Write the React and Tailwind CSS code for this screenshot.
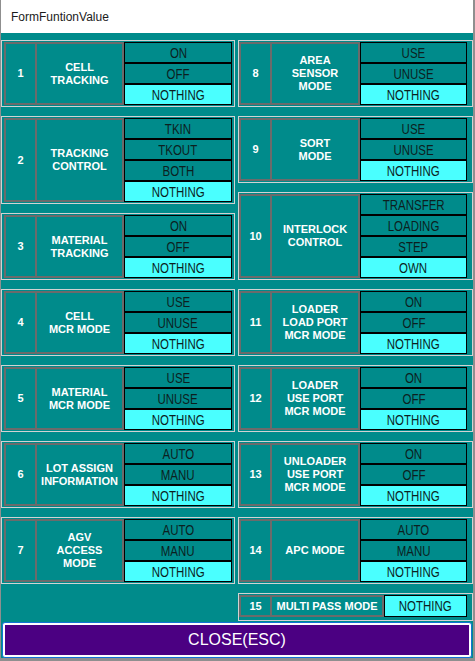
import React from "react";

const FONT = { fontFamily: '"Liberation Sans", Arial, sans-serif' };

const left = [
  { n: "1", label: ["CELL", "TRACKING"], opts: ["ON", "OFF", "NOTHING"], sel: 2 },
  { n: "2", label: ["TRACKING", "CONTROL"], opts: ["TKIN", "TKOUT", "BOTH", "NOTHING"], sel: 3 },
  { n: "3", label: ["MATERIAL", "TRACKING"], opts: ["ON", "OFF", "NOTHING"], sel: 2 },
  { n: "4", label: ["CELL", "MCR MODE"], opts: ["USE", "UNUSE", "NOTHING"], sel: 2 },
  { n: "5", label: ["MATERIAL", "MCR MODE"], opts: ["USE", "UNUSE", "NOTHING"], sel: 2 },
  { n: "6", label: ["LOT ASSIGN", "INFORMATION"], opts: ["AUTO", "MANU", "NOTHING"], sel: 2 },
  { n: "7", label: ["AGV", "ACCESS", "MODE"], opts: ["AUTO", "MANU", "NOTHING"], sel: 2 },
];

const right = [
  { n: "8", label: ["AREA", "SENSOR", "MODE"], opts: ["USE", "UNUSE", "NOTHING"], sel: 2 },
  { n: "9", label: ["SORT", "MODE"], opts: ["USE", "UNUSE", "NOTHING"], sel: 2 },
  { n: "10", label: ["INTERLOCK", "CONTROL"], opts: ["TRANSFER", "LOADING", "STEP", "OWN"], sel: 3 },
  { n: "11", label: ["LOADER", "LOAD PORT", "MCR MODE"], opts: ["ON", "OFF", "NOTHING"], sel: 2 },
  { n: "12", label: ["LOADER", "USE PORT", "MCR MODE"], opts: ["ON", "OFF", "NOTHING"], sel: 2 },
  { n: "13", label: ["UNLOADER", "USE PORT", "MCR MODE"], opts: ["ON", "OFF", "NOTHING"], sel: 2 },
  { n: "14", label: ["APC MODE"], opts: ["AUTO", "MANU", "NOTHING"], sel: 2 },
];

function Option({ text, selected }) {
  return (
    <div
      className={
        selected
          ? "h-[21px] border border-black bg-[#4affff] flex items-center justify-center overflow-hidden"
          : "h-[21px] border border-black bg-[#008b8b] flex items-center justify-center overflow-hidden"
      }
    >
      <span className="inline-block scale-x-[0.82] text-[14px] leading-[16px] text-[#0c1f1f] whitespace-nowrap" style={FONT}>
        {text}
      </span>
    </div>
  );
}

function Group({ g, side }) {
  return (
    <div
      className={
        side === "L"
          ? "flex border border-[#d2d2d2] pt-[1px] pb-[1px] pl-[2px] pr-[2px]"
          : "flex border border-[#d2d2d2] pt-[1px] pb-[1px] pl-0 pr-[5px]"
      }
    >
      <div
        className="w-[31px] shrink-0 border-2 border-r-0 border-[#6b6b6b] flex items-center justify-center text-white font-bold text-[11px]"
        style={FONT}
      >
        {g.n}
      </div>
      <div
        className={
          side === "L"
            ? "w-[89px] shrink-0 border-2 border-[#6b6b6b] flex flex-col items-center justify-center text-white font-bold text-[11px] leading-[13px] text-center"
            : "w-[90px] shrink-0 border-2 border-[#6b6b6b] flex flex-col items-center justify-center text-white font-bold text-[11px] leading-[13px] text-center"
        }
        style={FONT}
      >
        {g.label.map((l) => (
          <div key={l} className="whitespace-nowrap">
            {l}
          </div>
        ))}
      </div>
      <div className="flex-1 flex flex-col">
        {g.opts.map((o, i) => (
          <Option key={o} text={o} selected={i === g.sel} />
        ))}
      </div>
    </div>
  );
}

export default function App() {
  return (
    <div className="w-[475px] h-[661px] flex flex-col border-l border-r-2 border-b-[3px] border-[#8f8f8f] bg-white overflow-hidden">
      <div className="h-[33px] shrink-0 bg-white flex items-center pl-[10px] text-[12px] text-[#1b1b1b]" style={FONT}>
        FormFuntionValue
      </div>
      <div className="flex-1 bg-[#008b8b] flex flex-col pt-[7px]">
        <div className="flex gap-[3px]">
          <div className="w-[234px] flex flex-col gap-[9px]">
            {left.map((g) => (
              <Group key={g.n} g={g} side="L" />
            ))}
          </div>
          <div className="w-[235px] flex flex-col gap-[9px]">
            {right.map((g) => (
              <Group key={g.n} g={g} side="R" />
            ))}
            <div className="flex border border-[#d2d2d2] pt-[1px] pb-[3px] pl-0 pr-[5px]">
              <div
                className="w-[31px] h-[22px] shrink-0 border-2 border-r-0 border-[#6b6b6b] flex items-center justify-center text-white font-bold text-[11px]"
                style={FONT}
              >
                15
              </div>
              <div
                className="w-[114px] h-[22px] shrink-0 border-2 border-[#6b6b6b] flex items-center justify-center text-white font-bold text-[11px] whitespace-nowrap"
                style={FONT}
              >
                MULTI PASS MODE
              </div>
              <div className="flex-1 h-[22px] border border-black bg-[#4affff] flex items-center justify-center overflow-hidden">
                <span className="inline-block scale-x-[0.82] text-[14px] leading-[16px] text-[#0c1f1f]" style={FONT}>
                  NOTHING
                </span>
              </div>
            </div>
          </div>
        </div>
        <div className="mt-[1px] ml-[1px] w-[470px] h-[36px] rounded-[3px] border border-[#1272d4] bg-white p-[2px]">
          <div className="w-full h-full bg-[#4b0082] flex items-center justify-center text-white text-[16px]" style={FONT}>
            CLOSE(ESC)
          </div>
        </div>
      </div>
    </div>
  );
}
